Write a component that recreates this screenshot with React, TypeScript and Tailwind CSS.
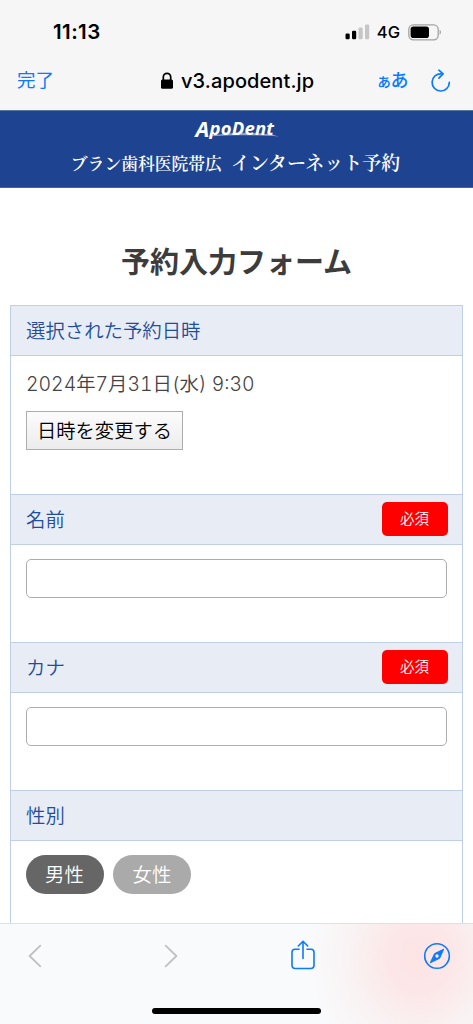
import type { ReactNode } from "react"

type SectionProps = {
  label: string
  required?: boolean
  className: string
  children: ReactNode
}

function Section({ label, required, className, children }: SectionProps) {
  return (
    <section>
      <div className="flex h-[51px] items-center justify-between border-y border-[#bfcfe6] bg-[#e8ecf4] pr-[14px] pl-[15px]">
        <h2 className="pb-[2px] text-[19.4px] leading-6 font-[350] text-[#1f4e9b]">{label}</h2>
        {required && (
          <span className="mb-px flex h-[34px] w-[66px] items-center justify-center rounded-[5px] bg-[#ff0000] pr-px pb-px text-[14.5px] leading-none font-[350] text-white">
            必須
          </span>
        )}
      </div>
      <div className={className}>{children}</div>
    </section>
  )
}

function StatusBar() {
  return (
    <div className="flex h-16 items-center justify-between pr-[31px] pl-[53px] text-black">
      <span className="text-[20.5px] leading-none font-semibold tracking-[0.4px]">11:13</span>
      <div className="flex items-center">
        <svg width="25" height="16" viewBox="0 0 25 16" className="mr-[7px]">
          <rect x="0.5" y="9.5" width="4.2" height="5.7" rx="1.2" />
          <rect x="7" y="6.7" width="4.2" height="8.5" rx="1.2" />
          <rect x="13.5" y="3.5" width="4.2" height="11.7" rx="1.2" fill="#c6c6c6" />
          <rect x="20" y="0.5" width="4.2" height="14.7" rx="1.2" fill="#c6c6c6" />
        </svg>
        <span className="mr-[8px] text-[16.5px] leading-none font-[450]">4G</span>
        <svg width="34" height="17" viewBox="0 0 34 17">
          <rect x="0.8" y="0.8" width="29.4" height="15" rx="4.5" fill="none" stroke="#a3a3a3" strokeWidth="1.3" />
          <rect x="2.6" y="2.6" width="18.4" height="11.4" rx="2.8" />
          <path d="M31.6 5.8c1.8.7 1.8 4.3 0 5z" fill="#a3a3a3" />
        </svg>
      </div>
    </div>
  )
}

function AddressBar() {
  return (
    <div className="flex h-[33px] items-center text-[#0a7aff]">
      <button className="ml-[17px] w-[143px] text-left text-[18.5px] leading-none">完了</button>
      <div className="flex w-[217px] items-center text-black">
        <svg width="14" height="18" viewBox="0 0 14 18" className="mr-[7px]">
          <path d="M3.3 9V5.2a3.7 3.9 0 0 1 7.4 0V9" fill="none" stroke="currentColor" strokeWidth="1.7" />
          <rect x="1" y="7.5" width="12" height="9.3" rx="1.6" />
        </svg>
        <span className="text-[20px] leading-none font-medium tracking-[0.1px]">v3.apodent.jp</span>
      </div>
      <div className="flex w-[53px] items-baseline leading-none font-medium">
        <span className="-ml-px text-[16px] tracking-[-1.5px]">ぁ</span>
        <span className="text-[18px]">あ</span>
      </div>
      <svg width="22" height="24" viewBox="0 0 22 24" fill="none" stroke="currentColor" strokeWidth="1.7" strokeLinecap="round" strokeLinejoin="round">
        <path d="M11.3 4.8A8.6 8.6 0 1 0 19.3 13.4" />
        <path d="M8.9 1.2l4.2 3.7-4.2 4.2" />
      </svg>
    </div>
  )
}

function ClinicHeader() {
  return (
    <header className="flex h-[78px] flex-col items-center border-t border-b border-t-[#5676a2] border-b-[#3d63a8] bg-[#1e4491] text-white">
      <div className="relative mt-[6px] h-[24px] w-[84px]">
        <svg width="84" height="24" viewBox="0 0 84 24" className="absolute inset-0">
          <path d="M10 19.5C32 15.5 64 13.5 84 19.5C63 17.8 38 18 10 19.5z" fill="#8ea6cf" />
        </svg>
        <span className="absolute -top-[2px] left-px font-['Open_Sans'] text-[18.5px] leading-[22px] font-bold tracking-[0.2px] italic">
          <span className="relative top-[2px] text-[22px] leading-none">A</span>
          poDent
        </span>
      </div>
      <h1 className="mt-[9px] mr-[2px] flex items-baseline gap-[9px] font-['Noto_Serif_CJK_JP','Noto_Sans_CJK_JP',serif] leading-6 font-semibold">
        <span className="text-[16.8px]">ブラン歯科医院帯広</span>
        <span className="text-[19px]">インターネット予約</span>
      </h1>
    </header>
  )
}

function Toolbar() {
  return (
    <nav className="flex h-[101px] flex-col items-center border-t border-[#dfe0e2] bg-[#f9fafc] bg-[radial-gradient(ellipse_110px_120px_at_420px_34px,#fde3e4_0%,#fce7e8_30%,#f9f3f3_65%,#f9fafc_100%)]">
      <div className="flex h-[64px] w-full items-center text-[#0a7aff]">
        <svg width="14" height="24" viewBox="0 0 14 24" fill="none" stroke="#bfc0c2" strokeWidth="1.8" strokeLinecap="round" strokeLinejoin="round" className="ml-[28px]">
          <path d="M12.3 1.7L1.6 12l10.7 10.3" />
        </svg>
        <svg width="14" height="24" viewBox="0 0 14 24" fill="none" stroke="#bfc0c2" strokeWidth="1.8" strokeLinecap="round" strokeLinejoin="round" className="ml-[122px]">
          <path d="M1.7 1.7L12.4 12 1.7 22.3" />
        </svg>
        <svg width="26" height="32" viewBox="0 0 26 32" fill="none" stroke="currentColor" strokeWidth="1.6" strokeLinecap="round" strokeLinejoin="round" className="mb-[2px] ml-[112px]">
          <path d="M9 10.3H5A3 3 0 0 0 2 13.3V26.5A3 3 0 0 0 5 29.5H21A3 3 0 0 0 24 26.5V13.3A3 3 0 0 0 21 10.3H17" />
          <path d="M13 19.5V2.5M8.3 7L13 2.3 17.7 7" />
        </svg>
        <svg width="28" height="28" viewBox="0 0 28 28" className="ml-[107px]">
          <circle cx="14" cy="14" r="12.3" fill="none" stroke="currentColor" strokeWidth="1.6" />
          <path d="M20.7 7.2L16.6 16.3 7.3 20.8 11.6 11.6z" fill="currentColor" stroke="currentColor" strokeLinejoin="round" />
          <circle cx="14" cy="14" r="1.7" fill="#fdeaec" />
        </svg>
      </div>
      <div className="mt-[20px] h-[6px] w-[169px] rounded-full bg-black" />
    </nav>
  )
}

export default function App() {
  return (
    <div className="flex h-[1024px] w-[473px] flex-col overflow-hidden bg-white font-['Inter','Noto_Sans_CJK_JP',sans-serif]">
      <div className="h-[110px] shrink-0 bg-[#f6f6f6]">
        <StatusBar />
        <AddressBar />
      </div>
      <ClinicHeader />

      <main className="flex min-h-0 flex-1 flex-col overflow-hidden px-[10px] font-['Noto_Sans_CJK_JP',sans-serif]">
        <h2 className="mt-[52px] mb-[25px] text-center text-[29px] leading-[40px] font-bold text-[#3c3c3c]">
          予約入力フォーム
        </h2>

        <div className="border-x border-[#bfcfe6]">
          <Section label="選択された予約日時" className="h-[138px] px-[15px] pt-[15px]">
            <p className="font-['Inter','Noto_Sans_CJK_JP',sans-serif] text-[19.4px] leading-[26px] font-[350] text-[#444] tabular-nums">
              2024年7月31日(水) 9:30
            </p>
            <button className="mt-[14px] h-[39px] w-[157px] border border-[#adadad] bg-linear-to-b from-[#fcfcfc] to-[#ececec] text-[19.3px] leading-none font-[350] text-black">
              日時を変更する
            </button>
          </Section>

          <Section label="名前" required className="h-[97px] px-[15px] pt-[14px]">
            <input className="h-[39px] w-full rounded-[5px] border border-[#adadad] bg-white px-2" aria-label="名前" />
          </Section>

          <Section label="カナ" required className="h-[97px] px-[15px] pt-[14px]">
            <input className="h-[39px] w-full rounded-[5px] border border-[#adadad] bg-white px-2" aria-label="カナ" />
          </Section>

          <Section label="性別" className="flex h-[97px] gap-[9.5px] px-[14.5px] pt-[14px] text-[19.4px] leading-none font-[350] text-white">
            <button className="h-[39px] w-[78px] rounded-full bg-[#666] pb-px">男性</button>
            <button className="h-[39px] w-[78px] rounded-full bg-[#aaa] pb-px">女性</button>
          </Section>
        </div>
      </main>

      <Toolbar />
    </div>
  )
}
